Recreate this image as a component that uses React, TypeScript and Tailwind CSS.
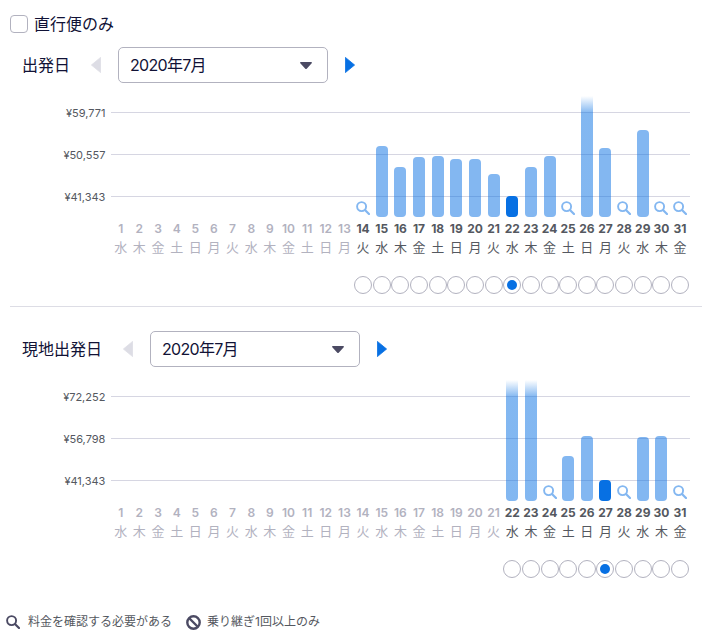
const weekdays = ["水", "木", "金", "土", "日", "月", "火"];
const days = Array.from({ length: 31 }, (_, i) => i + 1);

type Bar = { h: number; fade?: boolean; selected?: boolean };

type ChartProps = {
  labels: string[];
  firstActive: number;
  bars: Record<number, Bar>;
  searches: number[];
};

function SearchIcon({ className }: { className: string }) {
  return (
    <svg viewBox="0 0 14 14" className={className} fill="none" stroke="currentColor" strokeWidth="1.9" strokeLinecap="round">
      <circle cx="5.6" cy="5.6" r="4.5" />
      <path d="M9.2 9.2L13 13" strokeWidth="2.2" />
    </svg>
  );
}

function Arrow({ left, className }: { left?: boolean; className: string }) {
  return (
    <svg viewBox="0 0 10 16" className={className} fill="currentColor" stroke="currentColor" strokeWidth="0.8" strokeLinejoin="round">
      <path d={left ? "M9.6 .4V15.6L.4 8Z" : "M.4 .4V15.6L9.6 8Z"} />
    </svg>
  );
}

function MonthRow({ label }: { label: string }) {
  return (
    <div className="mt-[14px] flex h-9 items-center pl-[22px]">
      <span className="text-base leading-6 text-[#111236]">{label}</span>
      <Arrow left className="ml-[21px] h-4 w-2.5 text-[#dddde5]" />
      <div className="ml-[17px] flex h-9 w-[210px] items-center justify-between rounded-[5px] border border-[#b2b2bf] pl-[11px] pr-[15px]">
        <span className="text-base leading-6 tracking-[-0.7px] text-[#111236]">2020年7月</span>
        <svg viewBox="0 0 12 7" className="h-[7px] w-3 text-[#4b4a63]" fill="currentColor">
          <path d="M.8 0H11.2C11.9 0 12.2 .8 11.7 1.3L6.7 6.7C6.3 7.1 5.7 7.1 5.3 6.7L.3 1.3C-.2 .8 .1 0 .8 0Z" />
        </svg>
      </div>
      <Arrow className="ml-[17px] h-4 w-2.5 text-[#0770e3]" />
    </div>
  );
}

function Chart({ labels, firstActive, bars, searches }: ChartProps) {
  return (
    <div className="mt-[13px] flex">
      <div className="flex h-[121px] w-[111.4px] flex-col gap-[26px] pr-[6px] pt-[9px]">
        {labels.map((l) => (
          <span key={l} className="block h-4 text-right text-[11px] leading-4 text-[#545860]">
            {l}
          </span>
        ))}
      </div>
      <div className="relative w-[578.6px]">
        {[16, 58, 100].map((t) => (
          <div key={t} className="absolute left-0 right-0 h-px bg-[#d6d6e2]" style={{ top: t }} />
        ))}
        <div className="relative grid w-[578px] grid-cols-[repeat(31,minmax(0,1fr))]">
          {days.map((d) => {
            const active = d >= firstActive;
            const bar = bars[d];
            return (
              <div key={d} className="flex flex-col items-center">
                <div className="flex h-[121px] w-full items-end justify-center">
                  {bar && (
                    <div
                      className={`w-3 rounded-[4px] ${
                        bar.selected
                          ? "bg-[#0770e3]"
                          : bar.fade
                            ? "rounded-t-none bg-[linear-gradient(to_bottom,rgba(7,112,227,0),rgba(7,112,227,0.5)_17px)]"
                            : "bg-[#0770e3]/50"
                      }`}
                      style={{ height: bar.h }}
                    />
                  )}
                  {searches.includes(d) && <SearchIcon className="mb-[2px] h-3.5 w-3.5 text-[#83b7f1]" />}
                </div>
                <span className={`mt-1 h-4 whitespace-nowrap text-xs leading-4 ${active ? "font-bold text-[#545860]" : "font-semibold text-[#b2b2bf]"}`}>
                  {d}
                </span>
                <span className={`mt-0.5 h-4 whitespace-nowrap text-[13px] leading-4 ${active ? "text-[#545860]" : "text-[#b2b2bf]"}`}>
                  {weekdays[(d - 1) % 7]}
                </span>
                <div className="mt-[21px] flex h-[18px] w-[18px] items-center justify-center">
                  {active && (
                    <div className="flex h-[18px] w-[18px] shrink-0 items-center justify-center rounded-full border border-[#b2b2bf] bg-white">
                      {bar?.selected && <div className="h-2.5 w-2.5 rounded-full bg-[#0770e3]" />}
                    </div>
                  )}
                </div>
              </div>
            );
          })}
        </div>
      </div>
    </div>
  );
}

export default function App() {
  return (
    <div className="h-[637px] w-[719px] overflow-hidden bg-white pt-[15px] font-['Inter','Noto_Sans_CJK_JP',sans-serif]">
      <div className="flex h-[18px] items-center pl-[10px]">
        <div className="h-[18px] w-[18px] rounded-[4px] border border-[#b2b2bf]" />
        <span className="ml-[6px] text-base leading-6 text-[#111236]">直行便のみ</span>
      </div>

      <MonthRow label="出発日" />
      <Chart
        labels={["¥59,771", "¥50,557", "¥41,343"]}
        firstActive={14}
        searches={[14, 25, 28, 30, 31]}
        bars={{
          15: { h: 71 },
          16: { h: 50 },
          17: { h: 60 },
          18: { h: 61 },
          19: { h: 58 },
          20: { h: 58 },
          21: { h: 43 },
          22: { h: 21, selected: true },
          23: { h: 50 },
          24: { h: 61 },
          26: { h: 121, fade: true },
          27: { h: 69 },
          29: { h: 87 },
        }}
      />

      <div className="ml-[10px] mr-[17px] mt-3 h-px bg-[#dddde5]" />

      <div className="mt-6">
        <MonthRow label="現地出発日" />
      </div>
      <Chart
        labels={["¥72,252", "¥56,798", "¥41,343"]}
        firstActive={22}
        searches={[24, 28, 31]}
        bars={{
          22: { h: 121, fade: true },
          23: { h: 121, fade: true },
          25: { h: 45 },
          26: { h: 65 },
          27: { h: 21, selected: true },
          29: { h: 64 },
          30: { h: 65 },
        }}
      />

      <div className="mt-[36px] flex h-4 items-center pl-[6px] text-xs leading-4 text-[#545860]">
        <SearchIcon className="h-3.5 w-3.5 text-[#4b4a63]" />
        <span className="ml-2">料金を確認する必要がある</span>
        <svg viewBox="0 0 15 15" className="ml-[14px] h-[15px] w-[15px] text-[#4b4a63]" fill="none" stroke="currentColor" strokeWidth="2.4">
          <circle cx="7.5" cy="7.5" r="6.2" />
          <path d="M3 3L12 12" />
        </svg>
        <span className="ml-[6px]">乗り継ぎ1回以上のみ</span>
      </div>
    </div>
  );
}
